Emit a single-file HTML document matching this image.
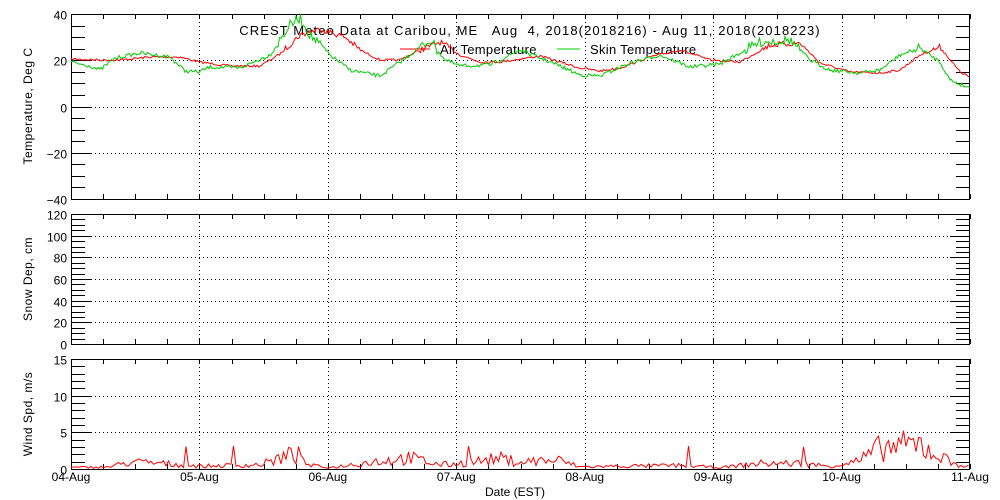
<!DOCTYPE html>
<html><head><meta charset="utf-8"><style>
html,body{margin:0;padding:0;background:#fff;width:1000px;height:500px;overflow:hidden}
svg text{font-family:"Liberation Sans",sans-serif;font-size:12px;fill:#000}
</style></head><body>
<svg id="s" width="1000" height="500" viewBox="0 0 1000 500" xmlns="http://www.w3.org/2000/svg" shape-rendering="crispEdges">
<text x="530" y="35" text-anchor="middle" xml:space="preserve" style="font-size:13px;letter-spacing:1.1px;white-space:pre">CREST Meteo Data at Caribou, ME   Aug  4, 2018(2018216) - Aug 11, 2018(2018223)</text>
<line x1="400" y1="49" x2="430" y2="49" stroke="#f00"/>
<text x="440" y="54" style="font-size:13px;letter-spacing:0.3px">Air Temperature</text>
<line x1="557" y1="49" x2="580" y2="49" stroke="#0c0"/>
<text x="590" y="54" style="font-size:13px;letter-spacing:0.3px">Skin Temperature</text>
<text transform="translate(32,106) rotate(-90)" text-anchor="middle" style="letter-spacing:0.5px">Temperature, Deg C</text>
<text transform="translate(32,279) rotate(-90)" text-anchor="middle" style="letter-spacing:0.5px">Snow Dep, cm</text>
<text transform="translate(32,414) rotate(-90)" text-anchor="middle" style="letter-spacing:0.5px">Wind Spd, m/s</text>
<text x="515" y="496" text-anchor="middle">Date (EST)</text>
<g id="g"></g>
</svg>
<script>
var g=document.getElementById('g'),h='';
var L=71,R=970;
function ln(x1,y1,x2,y2,c,d){h+='<line x1="'+x1+'" y1="'+y1+'" x2="'+x2+'" y2="'+y2+'" stroke="'+(c||'#000')+'"'+(d?' stroke-dasharray="1,3"':'')+'/>';}
function tx(x,y,t,a){h+='<text x="'+x+'" y="'+y+'" text-anchor="'+(a||'end')+'">'+t+'</text>';}
function panel(top,bot,vmin,vmax,major,minor){
  var sc=(bot-top)/(vmax-vmin);
  for(var v=vmin;v<=vmax+1e-6;v+=minor){var y=Math.round(bot-(v-vmin)*sc)+.5;ln(L,y,L+14,y);ln(R-14,y,R,y);}
  for(var v=vmin;v<=vmax+1e-6;v+=major){var y=Math.round(bot-(v-vmin)*sc)+.5;ln(L,y,L+20,y);ln(R-20,y,R,y);tx(L-4,y+5,(v<0?'\u2212':'')+Math.abs(v));
    if(v>vmin&&v<vmax)ln(L,y,R,y,'#000',1);}
  for(var i=0;i<=28;i++){var x=Math.round(L+i*(R-L)/28)+.5;ln(x,top,x,top+5);ln(x,bot-5,x,bot);
    if(i%4==0&&i>0&&i<28)ln(x,top,x,bot,'#000',1);}
  h+='<rect x="'+(L+.5)+'" y="'+(top+.5)+'" width="'+(R-L-1)+'" height="'+(bot-top)+'" fill="none" stroke="#000"/>';
}
panel(14,199,-40,40,20,5);
panel(214,344,0,120,20,5);
panel(359,469,0,15,5,1);
var days=['04-Aug','05-Aug','06-Aug','07-Aug','08-Aug','09-Aug','10-Aug','11-Aug'];
for(var i=0;i<8;i++)tx(L+i*(R-L)/7,481,days[i],'middle');
var seed=7;function rnd(){seed=(seed*16807)%2147483647;return seed/2147483647;}
function interp(k,x){for(var i=0;i<k.length-2;i+=2){if(x<=k[i+2]){var t=(x-k[i])/(k[i+2]-k[i]);return k[i+1]+t*(k[i+3]-k[i+1]);}}return k[k.length-1];}
var red=[71,59,100,60,120,60,150,57,180,57,199,62,230,66,260,66,280,54,300,35,320,29,345,37,360,50,380,60,400,60,420,50,440,42,460,55,480,62,500,62,520,59,540,56,560,62,580,68,600,71,620,68,650,57,680,50,710,60,740,62,770,45,800,43,820,63,850,72,880,73,900,70,920,55,940,47,960,72,970,77];
var grn=[71,62,90,66,100,70,115,58,140,53,170,57,185,71,199,72,210,67,240,68,270,55,290,25,300,18,310,35,330,55,350,70,380,76,410,55,430,40,445,60,460,66,490,65,520,50,540,58,560,66,580,75,600,76,630,63,660,55,690,67,720,64,760,42,790,40,810,60,830,70,860,73,880,70,900,55,920,48,940,62,950,80,970,88];
function curve(k,c,amp){var p='';for(var x=71;x<=970;x+=1.5){var b=interp(k,x);var y=b+(rnd()-.5)*amp*(b<50?4:1.5);p+=x.toFixed(1)+','+y.toFixed(1)+' ';}
 h+='<polyline points="'+p+'" fill="none" stroke="'+c+'" shape-rendering="auto"/>';}
curve(red,'#f00',1.5);curve(grn,'#0c0',2.5);
var wk=[71,0.2,110,0.3,130,1,160,0.8,200,0.4,260,0.6,290,2,310,0.5,330,0.2,370,1,410,1.6,440,0.6,460,0.8,500,1.5,520,1,540,1.2,560,1.2,580,0.3,620,0.4,680,0.5,720,0.2,760,0.8,800,0.8,830,0.4,860,1.2,880,3,920,3.5,950,1,970,0.3];
var p='';for(var x=71;x<=970;x+=2.5){var v=Math.max(0,interp(wk,x)*(0.3+rnd()*1.3));if(rnd()<.012)v+=2.5;p+=x+','+(469-v*7.33).toFixed(1)+' ';}
h+='<polyline points="'+p+'" fill="none" stroke="#f00" shape-rendering="auto"/>';
g.innerHTML=h;
</script>
</body></html>
